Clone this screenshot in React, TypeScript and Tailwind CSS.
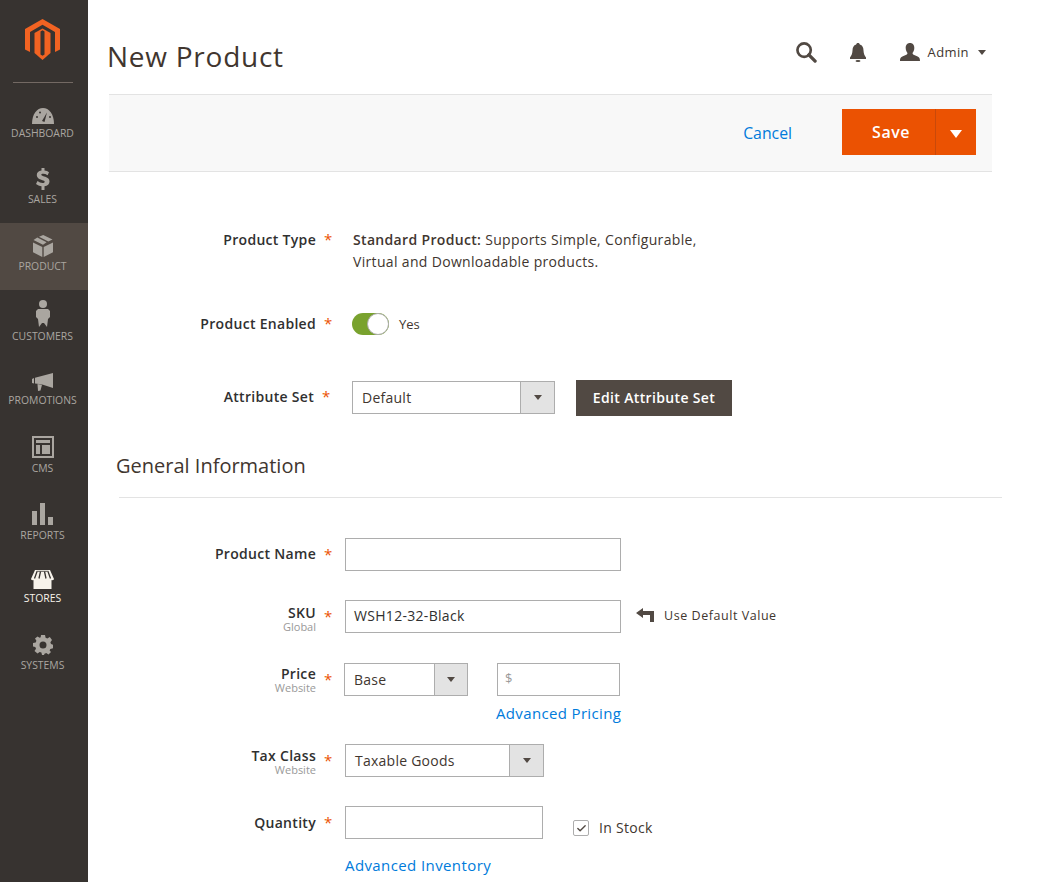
import { Check } from "lucide-react";
import type { ReactNode } from "react";

const NAV_ITEMS = [
  { label: "DASHBOARD", icon: "dashboard", box: "h-[73px] pt-[25px]", gap: "mt-[2px]" },
  { label: "SALES", icon: "sales", box: "h-[67px] pt-[12px]", gap: "mt-[2px]" },
  { label: "PRODUCT", icon: "product", box: "h-[67px] pt-[12px]", gap: "mt-[2px]", active: true },
  { label: "CUSTOMERS", icon: "customers", box: "h-[68px] pt-[10px]", gap: "mt-[2px]" },
  { label: "PROMOTIONS", icon: "promotions", box: "h-[68px] pt-[15px]", gap: "mt-[2px]" },
  { label: "CMS", icon: "cms", box: "h-[67px] pt-[10px]", gap: "mt-[3px]" },
  { label: "REPORTS", icon: "reports", box: "h-[67px] pt-[10px]", gap: "mt-[3px]" },
  { label: "STORES", icon: "stores", box: "h-[67px] pt-[10px]", gap: "mt-[2px]", white: true },
  { label: "SYSTEMS", icon: "systems", box: "h-[67px] pt-[8px]", gap: "mt-[3px]" },
];

function NavIcon({ name, color }: { name: string; color: string }) {
  if (name === "dashboard")
    return (
      <svg width="22" height="16" viewBox="0 0 22 16">
        <path d="M0 16 C0 6 5 0 11 0 C17 0 22 6 22 16 Z" fill={color} />
        <path d="M10 13 L15 4.5 L12.5 14 Z" fill="#373330" />
        <circle cx="5" cy="9" r="1" fill="#373330" />
        <circle cx="8" cy="4.5" r="1" fill="#373330" />
        <circle cx="18" cy="9" r="1" fill="#373330" />
      </svg>
    );
  if (name === "sales")
    return (
      <svg width="14" height="22" viewBox="0 0 14 22">
        <path
          d="M5.5 0h3v2.6c1.800.2 3.300.8 4.500 1.600l-1.400 3c-1.500-.9-3-1.400-4.400-1.400-1.300 0-1.900.4-1.900 1 0 .7.800 1 2.800 1.600 3.200.9 5.400 2 5.400 5 0 2.600-1.800 4.300-5 4.800V22h-3v-3.700c-2-.2-3.900-1-5.500-2.200l1.500-3c1.600 1.200 3.400 1.900 5 1.900 1.400 0 2.200-.4 2.200-1.200 0-.8-.8-1.100-2.900-1.800C3 11.100.8 10 .8 7.100.8 4.700 2.500 3 5.500 2.600Z"
          fill={color}
        />
      </svg>
    );
  if (name === "product")
    return (
      <svg width="20" height="22" viewBox="0 0 20 22">
        <path d="M0 7.500 L9.300 12 V22 L0 17.300 Z M20 7.500 L10.700 12 V22 L20 17.300 Z" fill={color} />
        <path d="M6 1.800 L10.200 0 L19.500 4.500 L15.300 6.600 Z M4.300 2.600 L13.600 7.300 L10 9.800 L0.500 5 Z" fill={color} />
      </svg>
    );
  if (name === "customers")
    return (
      <svg width="14" height="27" viewBox="0 0 14 27">
        <circle cx="7" cy="4" r="4" fill={color} />
        <path d="M2 9 H12 L14 11 V17 L12 19 L11 27 L8 23 H6 L3 27 L2 19 L0 17 V11 Z" fill={color} />
      </svg>
    );
  if (name === "promotions")
    return (
      <svg width="22" height="18" viewBox="0 0 22 18">
        <path d="M0 6 L2 5 V10.500 L0 10 Z M3 4.800 L21 0 V15 L11 11.800 L9 11.300 L3 10.500 Z" fill={color} />
        <path d="M5.500 11 L10 11.800 L8.500 17.500 L6 18 Z" fill={color} />
      </svg>
    );
  if (name === "cms")
    return (
      <svg width="22" height="22" viewBox="0 0 22 22">
        <path
          fillRule="evenodd"
          d="M0 0H22V22H0Z M2 2V20H20V2Z M4 4H18V7H4Z M4 9H8V18H4Z M10 9H18V18H10Z"
          fill={color}
        />
      </svg>
    );
  if (name === "reports")
    return (
      <svg width="21" height="22" viewBox="0 0 21 22">
        <path d="M0 8H5V22H0Z M8 0H13V22H8Z M16 14H21V22H16Z" fill={color} />
      </svg>
    );
  if (name === "stores")
    return (
      <svg width="23" height="19" viewBox="0 0 23 19">
        <path
          d="M4 0H19L23 9C23 10 21.500 10.500 20.500 10V19H2.500V10C1.500 10.500 0 10 0 9Z"
          fill={color}
        />
        <path d="M6 1.500 L3.500 8.500 M9.500 1.500 L8 8.500 M13.500 1.500 L15 8.500 M17 1.500 L19.500 8.500" stroke="#373330" strokeWidth="1.300" />
        <path d="M5.500 1.300 H17.500" stroke="#373330" strokeWidth="0.800" />
      </svg>
    );
  return (
    <svg width="20" height="20" viewBox="0 0 20 20">
      <path
        fillRule="evenodd"
        d="M8 0h4l.6 2.800 1.700.7L16.800 2 19 5l-1.600 2.300.6 1.700 2 .7v3.600l-2.700.6-.7 1.700L18 17l-2.500 2.500-2.300-1.500-1.700.7L11 20H9l-.6-2.400-1.700-.7L4.500 18.500 1.500 16l1.500-2.300-.7-1.700L0 11.500V8l2.700-.6.7-1.700L2 3.500 4.500 1.500l2.200 1.300 1-.6Z M10 6.500a3.500 3.500 0 1 0 0 7a3.500 3.500 0 0 0 0-7Z"
        fill={color}
      />
    </svg>
  );
}

function Sidebar() {
  return (
    <div className="w-[88px] h-full shrink-0 bg-[#373330] flex flex-col">
      <div className="h-[83px] shrink-0 flex flex-col items-center pr-[3px]">
        <svg className="mt-[19px]" width="35" height="41" viewBox="0 0 35 41">
          <path
            d="M17.500 0 L35 10 V30.500 L30 33 V13 L17.500 5.800 L5 13 V33 L0 30.500 V10 Z"
            fill="#f26322"
          />
          <path d="M17.500 9.500 L25.500 14 V34 L17.500 41 L9.500 34 V14 Z" fill="#f26322" />
          <path d="M15.500 12.500 L15.500 35.500 L17.500 36.700 L19.500 35.500 V12.500 L17.500 11.300 Z" fill="#373330" />
        </svg>
        <div className="mt-[22px] w-[60px] h-px bg-[#736963]" />
      </div>
      {NAV_ITEMS.map((item) => (
        <div
          key={item.label}
          className={`${item.box} shrink-0 flex flex-col items-center pr-[3px] ${item.active ? "bg-[#514943]" : ""}`}
        >
          <NavIcon name={item.icon} color={item.white ? "#f7f3eb" : "#aaa6a0"} />
          <span
            className={`${item.gap} text-[10.400px] leading-[14px] whitespace-nowrap ${item.white ? "text-[#f7f3eb]" : "text-[#aaa6a0]"}`}
          >
            {item.label}
          </span>
        </div>
      ))}
    </div>
  );
}

function Caret({ className }: { className: string }) {
  return <span className={`w-0 h-0 border-x-[4.5px] border-x-transparent border-t-[5px] ${className}`} />;
}

function Select({ value, w, arrowW = "w-[34px]", extra = "" }: { value: string; w: string; arrowW?: string; extra?: string }) {
  return (
    <div className={`${w} ${extra} h-[33px] border border-[#adadad] bg-white flex shrink-0`}>
      <span className="flex-1 pl-[9px] text-[14px] leading-[32px] tracking-[0.25px] text-[#41362f]">{value}</span>
      <div className={`${arrowW} bg-[#e3e3e3] border-l border-[#adadad] flex items-center justify-center`}>
        <Caret className="border-t-[#514943]" />
      </div>
    </div>
  );
}

function Input({ w, value = "" }: { w: string; value?: string }) {
  return (
    <div className={`${w} h-[33px] border border-[#adadad] bg-white pl-2 text-[14px] leading-[29px] tracking-[0.3px] text-[#303030] shrink-0`}>
      {value}
    </div>
  );
}

function Label({ text, scope, w = "w-[228px]", top = "" }: { text: string; scope?: string; w?: string; top?: string }) {
  return (
    <div className={`${w} ${top} shrink-0 text-right`}>
      <div className="text-[14px] leading-[17px] font-semibold text-[#303030] tracking-[0.3px]">{text}</div>
      {scope && <div className="text-[11px] leading-[12px] text-[#999]">{scope}</div>}
    </div>
  );
}

function Star({ w = "w-[36px]", top = "" }: { w?: string; top?: string }) {
  return <span className={`${w} ${top} shrink-0 pl-[8px] text-[15px] leading-[17px] text-[#eb5202] font-normal`}>*</span>;
}

function Row({ className, children }: { className: string; children: ReactNode }) {
  return <div className={`flex ${className}`}>{children}</div>;
}

export default function App() {
  return (
    <div className="flex h-[882px] w-[1039px] overflow-hidden bg-white font-['Open_Sans',sans-serif]">
      <Sidebar />
      <div className="flex-1 min-w-0">
        <div className="h-[94px] flex items-start">
          <h1 className="ml-[19px] mt-[36px] text-[28px] leading-[40px] font-normal text-[#41362f] tracking-[0.75px]">
            New Product
          </h1>
          <div className="ml-auto mr-[53px] mt-[41px] flex items-center h-[22px]">
            <svg width="21" height="21" viewBox="0 0 22 22">
              <circle cx="8.500" cy="8.500" r="7" fill="none" stroke="#514943" strokeWidth="2.800" />
              <path d="M13.500 13.500 L20 20" stroke="#514943" strokeWidth="3.500" strokeLinecap="round" />
            </svg>
            <svg className="ml-[33px]" width="16" height="19" viewBox="0 0 16 19">
              <path
                d="M8 0C9 0 9.800.7 9.800 1.600C12.500 2.400 13.400 4.500 13.500 7.500C13.600 10.500 14.500 12.500 16 14.500V16H0V14.500C1.500 12.500 2.400 10.500 2.500 7.500C2.600 4.500 3.500 2.400 6.200 1.600C6.200.7 7 0 8 0Z"
                fill="#514943"
              />
              <ellipse cx="8" cy="18" rx="2.500" ry="1" fill="#514943" />
            </svg>
            <svg className="ml-[34px]" width="20" height="18" viewBox="0 0 20 18">
              <path
                d="M10 0C13 0 14.300 2.200 14.300 5C14.300 7 13.500 8.600 12.500 10C12.500 11.500 14 12 16.500 13C18.500 13.800 20 14.500 20 18H0C0 14.500 1.500 13.800 3.500 13C6 12 7.500 11.500 7.500 10C6.500 8.600 5.700 7 5.700 5C5.700 2.200 7 0 10 0Z"
                fill="#514943"
              />
            </svg>
            <span className="ml-[8px] mt-[2px] text-[13px] text-[#41362f] tracking-[0.4px]">Admin</span>
            <Caret className="ml-[9px] border-t-[#514943]" />
          </div>
        </div>

        <div className="ml-[21px] w-[883px] h-[78px] bg-[#f8f8f8] border-y border-[#e3e3e3] flex items-center">
          <span className="ml-auto mt-[2px] text-[15.800px] text-[#007bdb]">Cancel</span>
          <div className="ml-[50px] mr-[16px] -mt-[2px] w-[134px] h-[46px] bg-[#eb5202] flex text-white">
            <span className="flex-1 pl-[5px] text-center text-[16px] leading-[46px] font-semibold tracking-[0.5px]">Save</span>
            <div className="w-[41px] border-l border-[#c9490a] flex items-center justify-center">
              <span className="w-0 h-0 mt-[3px] border-x-[6.500px] border-x-transparent border-t-[8px] border-t-white" />
            </div>
          </div>
        </div>

        <Row className="mt-[59px]">
          <Label text="Product Type" />
          <Star />
          <div className="ml-px text-[14px] leading-[22px] tracking-[0.33px] text-[#41362f] -mt-[2px]">
            <span className="font-semibold">Standard Product:</span> Supports Simple, Configurable,
            <br />
            Virtual and Downloadable products.
          </div>
        </Row>

        <Row className="mt-[40px] items-start h-[22px]">
          <Label text="Product Enabled" top="mt-[2px]" />
          <Star top="mt-[2px]" />
          <div className="relative w-[37px] h-[22px] rounded-full bg-[#79a22e] shrink-0">
            <span className="absolute right-0 top-0 w-[22px] h-[22px] rounded-full bg-white border border-[#adadad]" />
          </div>
          <span className="ml-[10px] mt-[2px] text-[13px] leading-[18px] text-[#41362f]">Yes</span>
        </Row>

        <Row className="mt-[45px] items-start h-[36px]">
          <Label text="Attribute Set" w="w-[226px]" top="mt-[8px]" />
          <Star w="w-[38px]" top="mt-[8px]" />
          <Select value="Default" w="w-[203px]" extra="mt-px" />
          <div className="ml-[21px] w-[156px] h-[36px] bg-[#514943] text-white text-[14px] leading-[36px] font-semibold text-center tracking-[0.35px]">
            Edit Attribute Set
          </div>
        </Row>

        <h2 className="ml-[28px] mt-[35px] text-[20px] leading-[30px] font-normal text-[#41362f]">
          General Information
        </h2>
        <div className="ml-[31px] mt-[16px] w-[883px] h-px bg-[#e3e3e3]" />

        <Row className="mt-[40px] items-start">
          <Label text="Product Name" top="mt-[7px]" />
          <Star w="w-[29px]" top="mt-[8px]" />
          <Input w="w-[276px]" />
        </Row>

        <Row className="mt-[29px]">
          <Label text="SKU" scope="Global" top="mt-[4px]" />
          <Star w="w-[29px]" top="mt-[8px]" />
          <Input w="w-[276px]" value="WSH12-32-Black" />
          <div className="ml-[15px] -mt-[1px] flex items-center">
            <svg className="-mt-[3px]" width="18" height="14" viewBox="0 0 18 14">
              <path d="M0 5 L7 0 V3 H18 V14 H14 V7 H7 V10 Z" fill="#514943" />
            </svg>
            <span className="ml-[10px] text-[12.500px] tracking-[0.55px] text-[#41362f]">Use Default Value</span>
          </div>
        </Row>

        <Row className="mt-[30px]">
          <Label text="Price" scope="Website" top="mt-[2px]" />
          <Star w="w-[28px]" top="mt-[8px]" />
          <div className="flex flex-col">
            <div className="flex">
              <Select value="Base" w="w-[124px]" arrowW="w-[33px]" />
              <div className="ml-[29px] w-[123px] h-[33px] border border-[#adadad] pl-[7px] text-[13px] leading-[28px] text-[#999]">$</div>
            </div>
            <span className="ml-[152px] mt-[5px] text-[15px] leading-[24px] text-[#007bdb] tracking-[0.35px]">Advanced Pricing</span>
          </div>
        </Row>

        <Row className="mt-[19px]">
          <Label text="Tax Class" scope="Website" top="mt-[3px]" />
          <Star w="w-[29px]" top="mt-[8px]" />
          <Select value="Taxable Goods" w="w-[199px]" />
        </Row>

        <Row className="mt-[29px]">
          <Label text="Quantity" top="mt-[8px]" />
          <Star w="w-[29px]" top="mt-[8px]" />
          <div className="flex flex-col">
            <div className="flex">
              <Input w="w-[198px]" />
              <div className="ml-[30px] mt-[14px] flex items-center h-[16px]">
                <span className="w-[16px] h-[16px] border border-[#adadad] rounded-[2px] flex items-center justify-center">
                  <Check size={11} strokeWidth={3} className="text-[#514943]" />
                </span>
                <span className="ml-[10px] -mt-[1px] text-[14px] tracking-[0.3px] text-[#41362f]">In Stock</span>
              </div>
            </div>
            <span className="mt-[14px] text-[15px] leading-[24px] text-[#007bdb] tracking-[0.4px]">Advanced Inventory</span>
          </div>
        </Row>
      </div>
    </div>
  );
}
